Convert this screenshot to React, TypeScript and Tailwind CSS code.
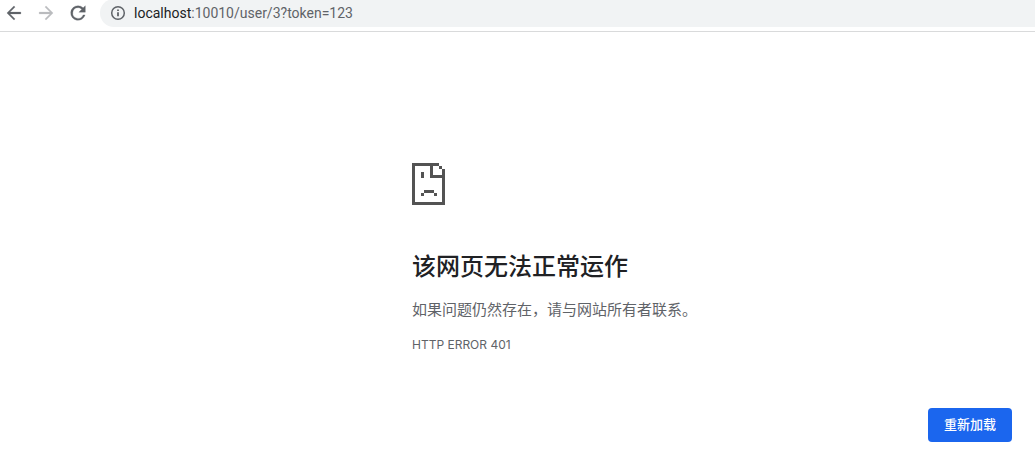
import { useState } from 'react';
import { cva } from 'class-variance-authority';
import type { ReactNode } from 'react';

const navButton = cva('flex size-8 items-center justify-center', {
  variants: {
    disabled: {
      true: 'text-[#babcbe]',
      false: 'text-[#5f6368]',
    },
  },
});

interface NavButtonProps {
  label: string;
  path: string;
  disabled?: boolean;
}

const NavButton = ({ label, path, disabled = false }: NavButtonProps) => {
  return (
    <button aria-label={label} disabled={disabled} className={navButton({ disabled })}>
      <svg viewBox="0 0 24 24" className="size-5" fill="currentColor" stroke="currentColor" strokeWidth="0.3">
        <path d={path} />
      </svg>
    </button>
  );
};

const Toolbar = () => {
  const [url, setUrl] = useState('localhost:10010/user/3?token=123');
  const [isEditing, setIsEditing] = useState(false);
  const [host, ...rest] = url.split(':');

  return (
    <header className="flex h-8 items-start border-b border-[#d9dadb]">
      <div className="-mt-[3px] -ml-0.5 flex w-[102px] shrink-0">
        <NavButton label="后退" path="M20.2 10.9H7.3l6-6-1.4-1.4L3.5 12l8.4 8.5 1.4-1.4-6-6h12.9z" />
        <NavButton label="前进" disabled path="M3.8 10.9h12.9l-6-6 1.4-1.4 8.4 8.5-8.4 8.5-1.4-1.4 6-6H3.8z" />
        <NavButton
          label="重新加载此页"
          path="M18.2 5.8A8.6 8.6 0 0 0 12 3.2a8.8 8.8 0 1 0 8.5 11.1h-2.4A6.4 6.4 0 1 1 12 5.6c1.8 0 3.3.7 4.5 1.9L13 11h7.8V3.2z"
        />
      </div>
      <div className="-mt-px flex h-7 min-w-0 grow items-center gap-2 rounded-l-full bg-[#f1f3f4] pl-2.5">
        <svg viewBox="0 0 16 16" className="size-4 shrink-0 text-[#5f6368]" fill="none" stroke="currentColor">
          <circle cx="8" cy="8" r="6.3" strokeWidth="1.5" />
          <path d="M8 7.2v4M8 4.5V6" strokeWidth="1.8" />
        </svg>
        {isEditing ? (
          <input
            autoFocus
            aria-label="地址"
            value={url}
            onChange={(e) => setUrl(e.target.value)}
            onBlur={() => setIsEditing(false)}
            className="min-w-0 grow bg-transparent text-sm text-[#202124] outline-none"
          />
        ) : (
          <button onClick={() => setIsEditing(true)} className="grow truncate text-left text-sm text-[#5f6368]">
            <span className="text-[#202124]">{host}</span>
            {rest.length > 0 && `:${rest.join(':')}`}
          </button>
        )}
      </div>
    </header>
  );
};

const SadPage = () => {
  return (
    <svg viewBox="0 0 33 42" className="h-[42px] w-[33px] text-[#535353]" fill="currentColor" shapeRendering="crispEdges">
      <path d="M0 0h27v3h-6v9h9V6h3v36H0zM3 3v36h27V15H18V3z" fillRule="evenodd" />
      <path d="M27 3h3v3h-3zM9 9h3v6H9zM12 27h10v3H12zM9 30h3v3H9zM22 30h3v3h-3z" />
    </svg>
  );
};

interface ErrorPageProps {
  title: string;
  code: string;
  children: ReactNode;
}

const ErrorPage = ({ title, code, children }: ErrorPageProps) => {
  return (
    <main className="flex justify-end pt-[131px] pr-[23px] pl-6">
      <div className="w-full max-w-[600px]">
        <SadPage />
        <h1 className="mt-[46px] text-2xl font-medium text-[#202124]">{title}</h1>
        <p className="mt-[15px] text-[15px] leading-6 text-[#5f6368]">{children}</p>
        <p className="mt-[13px] font-[Inter,sans-serif] text-xs leading-5 text-[#5f6368]">{code}</p>
        <div className="mt-[53px] flex justify-end">
          <button
            onClick={() => window.location.reload()}
            className="rounded bg-[#1b66ee] px-4 py-2 text-[13px] leading-[18px] font-medium text-white">
            重新加载
          </button>
        </div>
      </div>
    </main>
  );
};

export default function App() {
  return (
    <div className="bg-white font-[Roboto,'Noto_Sans_CJK_SC',sans-serif]" lang="zh-CN">
      <Toolbar />
      <ErrorPage title="该网页无法正常运作" code="HTTP ERROR 401">
        如果问题仍然存在，请与网站所有者联系。
      </ErrorPage>
    </div>
  );
}
